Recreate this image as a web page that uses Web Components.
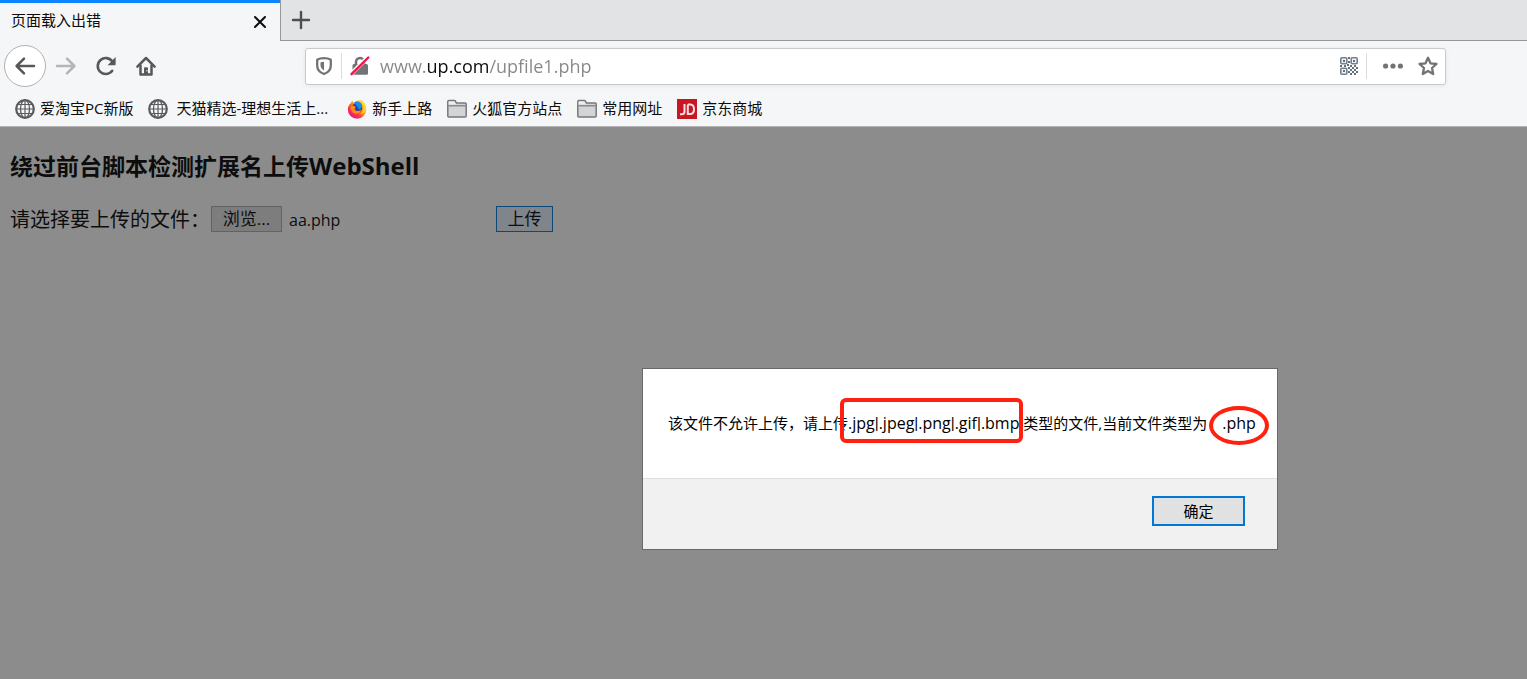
<!DOCTYPE html>
<html lang="zh-CN">
<head>
<meta charset="utf-8">
<title>页面载入出错</title>
<style>
  html, body { height: 100%; }
  body { margin: 0; font-family: "Open Sans", "Noto Sans CJK SC", sans-serif; font-size: 15px; color: #0c0c0d; }
  upload-page span { font-size: 24px; }
  mark-box span { font-family: Roboto, sans-serif; }
</style>
</head>
<body>
<browser-window>
  <tab-strip slot="tabs"><browser-tab>页面载入出错</browser-tab></tab-strip>
  <nav-bar slot="nav"></nav-bar>
  <bookmarks-bar slot="bookmarks">
    <bookmark-item icon="globe">爱淘宝PC新版</bookmark-item>
    <bookmark-item icon="globe" wide>天猫精选-理想生活上...</bookmark-item>
    <bookmark-item icon="firefox">新手上路</bookmark-item>
    <bookmark-item icon="folder">火狐官方站点</bookmark-item>
    <bookmark-item icon="folder">常用网址</bookmark-item>
    <bookmark-item icon="jd">京东商城</bookmark-item>
  </bookmarks-bar>
  <upload-page>绕过前台脚本检测扩展名上传<span>WebShell</span></upload-page>
  <alert-dialog slot="modal">该文件不允许上传，请上传<mark-box>.jpg<span>|</span>.jpeg<span>|</span>.png<span>|</span>.gif<span>|</span>.bmp</mark-box> 类型的文件,当前文件类型为<mark-box round>.php</mark-box></alert-dialog>
</browser-window>

<script>
const define = (name, html, setup) => {
  const template = document.createElement('template');
  template.innerHTML = html;
  customElements.define(name, class extends HTMLElement {
    constructor() {
      super();
      this.attachShadow({ mode: 'open' }).append(template.content.cloneNode(true));
    }
    connectedCallback() { if (setup) setup(this, this.shadowRoot); }
  });
};

const stroke = (d, w = 2) =>
  `<path d="${d}" fill="none" stroke="currentColor" stroke-width="${w}" stroke-linecap="round" stroke-linejoin="round"/>`;

const ICONS = {
  close: stroke('M5 5 15 15M15 5 5 15', 2),
  plus: stroke('M10 2V18M2 10H18', 2.4),
  back: stroke('M19 10H2M9 2.6 1.6 10 9 17.4', 2.5),
  forward: stroke('M1 10H18M11 2.6 18.4 10 11 17.4', 2.5),
  reload: stroke('M16.2 14.8A8 8 0 1 1 16.4 5.6', 2.6) + '<path d="M19.6 1v7.4a.8.8 0 0 1-.8.8h-7.2z" fill="currentColor"/>',
  home: stroke('M1.4 10.6 10 2l8.600 8.600', 2.5) + stroke('M4.500 9.500V18.600H15.500V9.500', 2.5) +
    '<path d="M8 18.500V12.200a1 1 0 0 1 1-1h2a1 1 0 0 1 1 1V18.500z" fill="currentColor"/><path d="M10.400 14h1v1.400h-1z" fill="#f5f6f7"/>',
  shield: stroke('M10 2.200C7.500 2.200 5 2.700 3.200 3.800V9.500C3.200 14 6 16.600 10 18C14 16.600 16.800 14 16.800 9.500V3.800C15 2.700 12.500 2.200 10 2.200Z', 2.3) +
    '<path d="M10 5.800v8.600C7.500 13 6.500 11.500 6.500 9V6.300z" fill="currentColor"/>',
  lock: stroke('M6 9V6a4 4 0 0 1 8 0V9', 2.6) +
    '<rect x="2.500" y="8" width="15.500" height="10.800" rx="1.500" fill="currentColor"/>' +
    '<path d="M1 18 18 1" stroke="#fff" stroke-width="4"/><path d="M1.500 18.200 18.300 1.500" stroke="#f0124c" stroke-width="2.400" stroke-linecap="round"/>',
  qr: '<g fill="#edf2f7" stroke="#75808e" stroke-width="1.600"><rect x="1.800" y="1.800" width="6" height="6" rx="1"/><rect x="12.200" y="1.800" width="6" height="6" rx="1"/><rect x="1.800" y="12.200" width="6" height="6" rx="1"/></g>' +
    '<g fill="#65707e"><path d="M4 4h2v2H4zM14 4h2v2h-2zM4 14h2v2H4zM9 1h2v2H9zM9 5h2v2H9zM1 9h2v2H1zM5 9h2v2H5zM8 8h2v2H8zM11 9h2v2h-2zM15 9h2v2h-2zM17 11h2v2h-2zM13 11h2v2h-2zM9 11h2v2H9zM11 13h2v2h-2zM15 13h2v2h-2zM9 15h2v2H9zM13 15h2v2h-2zM17 15h2v2h-2zM11 17h2v2h-2zM15 17h2v2h-2z"/></g>',
  dots: '<g fill="currentColor"><circle cx="2.600" cy="10" r="2.600"/><circle cx="10" cy="10" r="2.600"/><circle cx="17.400" cy="10" r="2.600"/></g>',
  star: stroke('M10 1.800 12.500 7.300 18.500 8 14 12 15.200 18 10 15 4.800 18 6 12 1.500 8 7.500 7.300Z', 2.3),
  globe: '<g fill="none" stroke="currentColor"><circle cx="10" cy="10" r="8.800" stroke-width="2.200"/><ellipse cx="10" cy="10" rx="4.500" ry="8.800" stroke-width="1.300"/><path d="M10 1V19M1 10H19M2.500 5.500H17.500M2.500 14.500H17.500" stroke-width="1.200"/></g>',
  folder: '<path d="M.8 17V2.600q0-1 1-1H7.400q.8 0 1.200.8l.9 1.700H18.200q1 0 1 1V17q0 1-1 1H1.800q-1 0-1-1Z" fill="#d3d4d5" stroke="#77787a" stroke-width="1.500"/><path d="M1.500 6.800H18.500" stroke="#77787a" stroke-width="1.200"/><path d="M1.600 5V2.400H7.300L8.800 5.600H1.600Z" fill="#eceded"/>',
  firefox: '<defs><linearGradient id="a" x1=".9" y1=".1" x2=".2" y2=".9"><stop stop-color="#ffe226"/><stop offset=".4" stop-color="#ff9a13"/><stop offset=".7" stop-color="#ff3a3c"/><stop offset="1" stop-color="#e8178a"/></linearGradient></defs>' +
    '<path d="M4 4 5 1.800 7 4C8 3 9 2.200 10 1.500L14.500 1.300C17.500 3.500 19.300 6.500 19.200 10.500A9.200 9.200 0 0 1 .8 10.500C.8 8 2 5.500 4 4Z" fill="url(#a)"/>' +
    '<circle cx="10.300" cy="8.800" r="5" fill="#2a3fa8"/><path d="M7 3.800C9 1.500 13 2 14.700 5.200 15.700 8 14 10 12 10.500L10 7Z" fill="#168ee5"/>' +
    '<path d="M3.500 7.500 7 6.800 8.800 8 7.600 10.200C8.500 12.200 11.500 12.500 14 10.700 13.500 14.500 9 16 6 13.800 4 12 3.200 10 3.500 7.500Z" fill="#ff8a16"/><path d="M14.500 3C18 7 17.500 12 13.500 15 17 15 19 12 18.700 8.500 18.300 5.500 16.500 2.500 13.500 1.500Z" fill="#ffd928"/>',
  jd: '<path d="M0 0H20V20H0Z" fill="#c81623"/><path d="M7.500 5V12.800Q7.500 15.200 5 15.200H3M10.800 5.500V15H13.200Q17 15 17 10.200T13.200 5.500H10.800" fill="none" stroke="#f8dfe1" stroke-width="2"/>'
};

define('ui-icon', `<style>
  :host { display: block; flex: none; width: 20px; height: 20px; }
  svg { display: block; width: 100%; height: 100%; overflow: visible; }
</style><svg viewBox="0 0 20 20" aria-hidden="true"></svg>`, (el, root) => {
  root.querySelector('svg').innerHTML = ICONS[el.getAttribute('name')];
});

define('browser-window', `<style>
  :host { display: flex; flex-direction: column; min-height: 100%; }
  header { background: #f5f6f7; border-bottom: 1px solid #b4b4b5; }
  main { flex: 1; position: relative; background: #fff; }
</style>
<header><slot name="tabs"></slot><slot name="nav"></slot><slot name="bookmarks"></slot></header>
<main><slot></slot><slot name="modal"></slot></main>`);

define('tab-strip', `<style>
  :host { display: flex; height: 41px; }
  .rest { flex: 1; display: flex; align-items: center; background: #e2e3e4; border-left: 1px solid #97979a; border-bottom: 1px solid #97979a; }
  button { border: 0; padding: 0 10px; background: none; color: #4f4f52; }
</style>
<slot></slot><div class="rest"><button aria-label="新建标签页"><ui-icon name="plus"></ui-icon></button></div>`);

define('browser-tab', `<style>
  :host { display: flex; box-sizing: border-box; width: 280px; align-items: center; justify-content: space-between; padding: 0 10px 0 11px; border-top: 3px solid #0a84ff; line-height: 20px; }
  span { padding-bottom: 5px; }
  button { border: 0; padding: 0; background: none; color: #0c0c0d; }
</style>
<span><slot></slot></span><button aria-label="关闭"><ui-icon name="close"></ui-icon></button>`);

define('nav-bar', `<style>
  :host { display: flex; align-items: center; height: 50px; padding: 0 81px 0 4px; color: #58585a; }
  nav { display: flex; align-items: center; flex: none; width: 301px; }
  nav button { display: flex; align-items: center; justify-content: center; width: 40px; height: 42px; padding: 0; border: 0; background: none; color: inherit; }
  nav .back { width: 42px; border: 1px solid #b1b1b3; border-radius: 50%; background: #fff; }
  nav button:disabled { color: #b4b5b6; }
  .url { flex: 1; min-width: 0; box-sizing: border-box; display: flex; align-items: center; height: 37px; padding: 0 7px 0 8px; background: #fff; border: 1px solid #c9cacb; border-radius: 3px; box-shadow: 0 1px 5px rgba(0,0,0,.07); color: #737375; }
  .url button { flex: none; border: 0; padding: 0; background: none; color: inherit; }
  .sep { flex: none; width: 1px; height: 26px; background: #dcdcdd; margin: 0 8px 0 7px; }
  input { flex: 1; min-width: 0; border: 0; padding: 0; margin: 0 10px; outline: 0; font: 18px/28px "Open Sans", "Noto Sans CJK SC", sans-serif; color: #87878a;
    background: linear-gradient(90deg, #87878a 45px, #0c0c0d 45px, #0c0c0d 109px, #87878a 109px); -webkit-background-clip: text; background-clip: text; -webkit-text-fill-color: transparent; }
  .dots { margin: 0 15px 0 8px; }
</style>
<nav>
  <button class="back" aria-label="后退"><ui-icon name="back"></ui-icon></button>
  <button aria-label="前进" disabled><ui-icon name="forward"></ui-icon></button>
  <button aria-label="刷新"><ui-icon name="reload"></ui-icon></button>
  <button aria-label="主页"><ui-icon name="home"></ui-icon></button>
</nav>
<div class="url">
  <button aria-label="跟踪保护"><ui-icon name="shield"></ui-icon></button>
  <span class="sep"></span>
  <button aria-label="连接不安全"><ui-icon name="lock"></ui-icon></button>
  <input aria-label="网址" value="www.up.com/upfile1.php" spellcheck="false">
  <button aria-label="二维码"><ui-icon name="qr"></ui-icon></button>
  <span class="sep"></span>
  <button class="dots" aria-label="页面操作"><ui-icon name="dots"></ui-icon></button>
  <button aria-label="添加书签"><ui-icon name="star"></ui-icon></button>
</div>`);

define('bookmarks-bar', `<style>
  :host { display: flex; align-items: center; gap: 15px; height: 35px; padding: 0 15px; }
</style><slot></slot>`);

define('bookmark-item', `<style>
  :host { display: block; flex: none; }
  a { display: flex; align-items: center; gap: 5px; line-height: 20px; color: #0c0c0d; text-decoration: none; white-space: nowrap; }
  span { padding-bottom: 2px; }
  ui-icon { color: #5a5b5d; }
  :host([wide]) a { gap: 8px; padding-right: 4px; }
</style><a href="#"><ui-icon></ui-icon><span><slot></slot></span></a>`, (el, root) => {
  const icon = document.createElement('ui-icon');
  icon.setAttribute('name', el.getAttribute('icon'));
  root.querySelector('ui-icon').replaceWith(icon);
});

define('upload-page', `<style>
  :host { display: block; padding: 22px 10px; color: #000; }
  h3 { margin: 0 0 21px; font-size: 23px; line-height: 34px; font-weight: 700; }
  form { display: flex; align-items: center; height: 30px; font-size: 20px; }
  label { width: 201px; padding-bottom: 2px; white-space: nowrap; }
  .file { display: flex; align-items: center; gap: 7px; width: 285px; font-size: 16px; }
  output { padding-top: 2px; }
  input { position: absolute; width: 1px; height: 1px; opacity: 0; }
  button { box-sizing: border-box; height: 26px; padding: 0; border: 1px solid #adadad; background: #e1e1e1; font: 17px/24px "Open Sans", "Noto Sans CJK SC", sans-serif; color: #000; }
  .browse { width: 71px; }
  .send { width: 57px; border-color: #0078d7; background: #e5f1fb; }
</style>
<h3><slot></slot></h3>
<form onsubmit="return false">
  <label for="file">请选择要上传的文件：</label>
  <div class="file"><input id="file" type="file" tabindex="-1"><button class="browse" type="button">浏览...</button><output for="file">aa.php</output></div>
  <button class="send">上传</button>
</form>`, (el, root) => {
  const input = root.querySelector('input');
  root.querySelector('.browse').onclick = () => input.click();
  input.onchange = () => { root.querySelector('output').value = input.files.length ? input.files[0].name : ''; };
});

define('alert-dialog', `<style>
  :host { position: absolute; inset: 0; display: flex; align-items: flex-start; justify-content: flex-end; padding: 241px 249px 0 0; background: rgba(26,26,26,.5); color: #000; }
  section { box-sizing: border-box; width: 636px; border: 1px solid #696969; background: #f1f1f1; }
  p { margin: 0; padding: 44px 0 44px 25px; line-height: 21px; background: #fff; border-bottom: 1px solid #dfdfdf; white-space: nowrap; }
  footer { display: flex; justify-content: flex-end; padding: 17px 32px 23px; }
  button { box-sizing: border-box; width: 93px; height: 30px; padding: 0; border: 2px solid #0078d7; background: #e1e1e1; font: 15px/20px "Open Sans", "Noto Sans CJK SC", sans-serif; color: #000; }
</style>
<section role="alertdialog" aria-modal="true"><p><slot></slot></p><footer><button>确定</button></footer></section>`);

define('mark-box', `<style>
  :host { display: inline-block; position: relative; font-size: 16px; }
  i { position: absolute; inset: -15px -4px -9px -8px; border: 4px solid #ff2010; border-radius: 6px; }
  :host([round]) { margin-left: 15px; }
  :host([round]) i { inset: -7px -13px -11px -13px; border-radius: 50%; }
</style><slot></slot><i></i>`);
</script>
</body>
</html>
